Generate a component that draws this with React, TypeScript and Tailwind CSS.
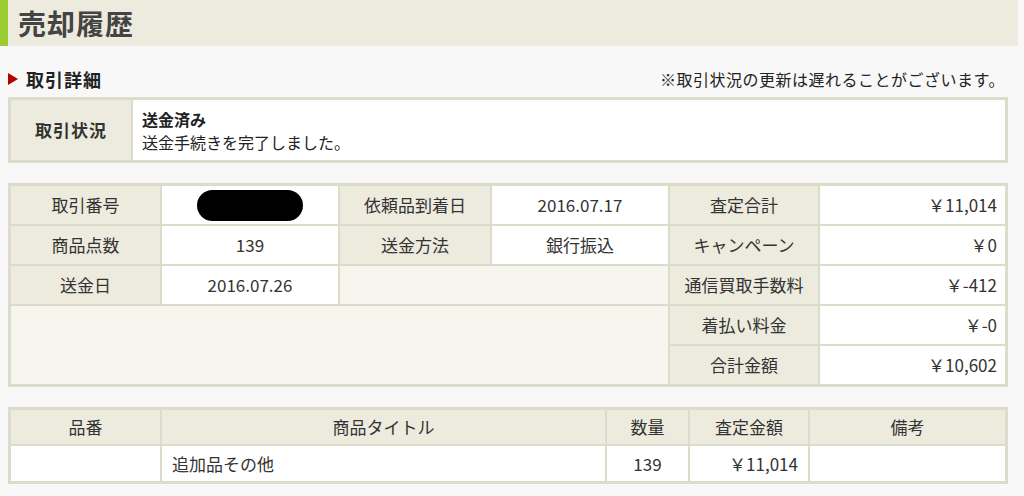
import React from 'react';

// 売却履歴 - 取引詳細ページ

const FONT = "font-['Noto_Sans_CJK_JP','Noto_Sans',sans-serif]";

const Label = ({ children, className = '' }: { children?: React.ReactNode; className?: string }) => (
  <div className={`flex items-center justify-center bg-[#ecebdd] text-[17px] text-[#333] ${className}`}>{children}</div>
);

const Value = ({ children, className = 'justify-center' }: { children?: React.ReactNode; className?: string }) => (
  <div className={`flex items-center bg-white text-[17px] text-[#333] ${className}`}>{children}</div>
);

export default function App() {
  return (
    <div className={`min-h-[496px] w-[1024px] bg-[#f8f8f8] ${FONT}`}>
      {/* タイトル */}
      <div className="mr-[6px] flex h-[46px] items-center border-l-[8px] border-[#9acd32] bg-[#ecebdd] pl-[10px]">
        <h1 className="text-[28px] font-bold leading-none tracking-[1px] text-[#444]">売却履歴</h1>
      </div>

      {/* 取引詳細 見出し */}
      <div className="mt-[22px] flex h-[22px] items-center justify-between pl-[8px] pr-[19px]">
        <div className="flex items-center gap-[8px]">
          <span className="h-0 w-0 border-y-[6px] border-l-[10px] border-y-transparent border-l-[#b40000]" />
          <span className="text-[18px] font-bold tracking-[1px] text-[#222]">取引詳細</span>
        </div>
        <span className="text-[16px] tracking-[0.5px] text-[#222]">※取引状況の更新は遅れることがございます。</span>
      </div>

      {/* 取引状況 */}
      <div className="ml-[8px] mt-[7px] grid h-[66px] w-[1000px] grid-cols-[120px_1fr] gap-[2px] bg-[#dcdccb] p-[3px]">
        <Label className="font-bold tracking-[1px]">取引状況</Label>
        <div className="flex flex-col justify-center bg-white pl-[9px] pt-[2px] text-[16px] leading-[23px] text-[#222]">
          <span className="font-bold">送金済み</span>
          <span>送金手続きを完了しました。</span>
        </div>
      </div>

      {/* 取引情報 */}
      <div className="ml-[8px] mt-[20px] grid w-[1000px] grid-cols-[149px_176px_150px_176px_148px_185px] grid-rows-[38px_38px_38px_38px_38px] gap-[2px] bg-[#dcdccb] p-[3px]">
        <Label>取引番号</Label>
        <Value>
          <span className="h-[31px] w-[106px] rounded-[16px] bg-black" />
        </Value>
        <Label>依頼品到着日</Label>
        <Value>2016.07.17</Value>
        <Label>査定合計</Label>
        <Value className="justify-end pr-[8px]">￥11,014</Value>

        <Label>商品点数</Label>
        <Value>139</Value>
        <Label>送金方法</Label>
        <Value>銀行振込</Value>
        <Label>キャンペーン</Label>
        <Value className="justify-end pr-[8px]">￥0</Value>

        <Label>送金日</Label>
        <Value>2016.07.26</Value>
        <div className="col-span-2 bg-[#f7f6ee]" />
        <Label>通信買取手数料</Label>
        <Value className="justify-end pr-[8px]">￥-412</Value>

        <div className="col-span-4 row-span-2 bg-[#f7f6ee]" />
        <Label>着払い料金</Label>
        <Value className="justify-end pr-[8px]">￥-0</Value>
        <Label>合計金額</Label>
        <Value className="justify-end pr-[8px]">￥10,602</Value>
      </div>

      {/* 商品一覧 */}
      <div className="ml-[8px] mt-[20px] grid w-[1000px] grid-cols-[149px_443px_81px_118px_195px] grid-rows-[34px_35px] gap-[2px] bg-[#dcdccb] p-[3px]">
        <Label>品番</Label>
        <Label>商品タイトル</Label>
        <Label>数量</Label>
        <Label>査定金額</Label>
        <Label>備考</Label>

        <Value />
        <Value className="justify-start pl-[10px]">追加品その他</Value>
        <Value>139</Value>
        <Value className="justify-end pr-[10px]">￥11,014</Value>
        <Value />
      </div>
    </div>
  );
}
